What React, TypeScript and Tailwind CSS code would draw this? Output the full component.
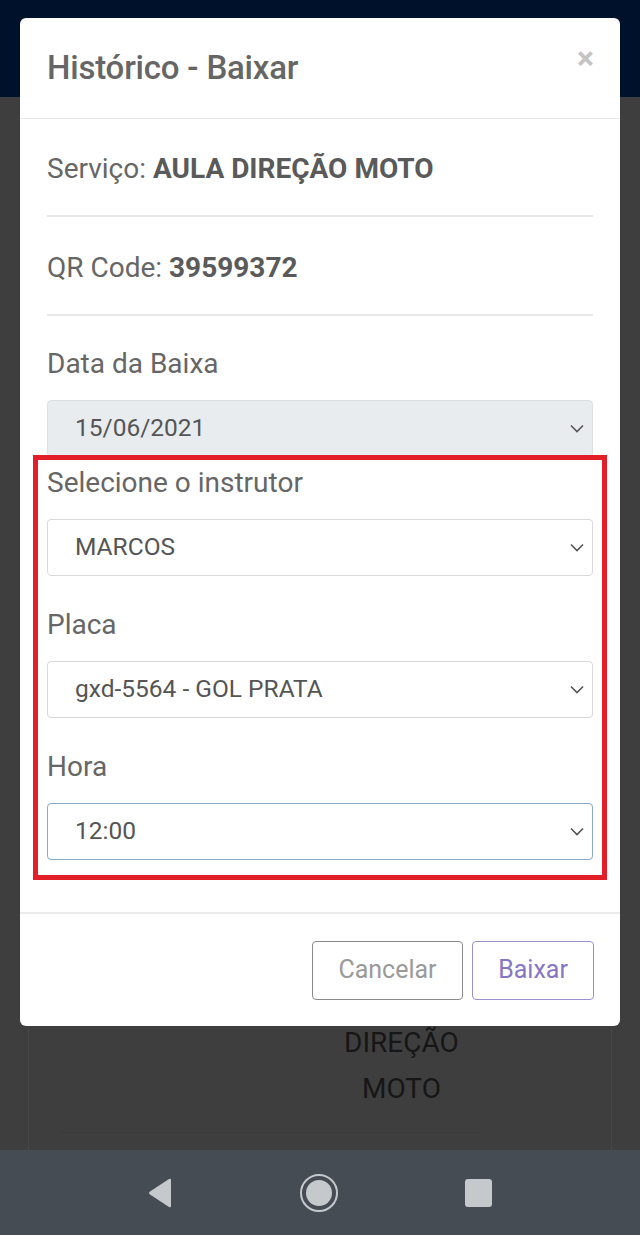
import React from "react";

const Chevron = () => (
  <svg width="14" height="9" viewBox="0 0 14 9" className="shrink-0">
    <path d="M1 1.5 L7 7.5 L13 1.5" fill="none" stroke="#555" strokeWidth="1.6" />
  </svg>
);

function Select({ value, disabled, focus }: { value: string; disabled?: boolean; focus?: boolean }) {
  return (
    <div
      className={`h-[57px] rounded-[4px] border flex items-center justify-between pl-[27px] pr-[8px] text-[24.5px] ${
        disabled ? "bg-[#e9ecef] border-[#dcdfe2]" : "bg-white"
      } ${focus ? "border-[#86acca] border-[1.5px]" : disabled ? "" : "border-[#d9d9d9]"} text-[#555]`}
    >
      <span>{value}</span>
      <Chevron />
    </div>
  );
}

function Label({ children }: { children: React.ReactNode }) {
  return <div className="text-[28px] leading-[36px] text-[#666]">{children}</div>;
}

export default function App() {
  return (
    <div
      className="relative w-[640px] h-[1235px] overflow-hidden bg-[#3e3e3e] flex flex-col"
      style={{ fontFamily: "Roboto, 'Noto Sans', sans-serif" }}
    >
      {/* page behind the modal */}
      <div className="h-[97px] bg-[#00122b] shrink-0" />
      <div className="flex-1 flex flex-col px-[28px]">
        <div className="flex-1 border-x border-[#474747] flex flex-col justify-end items-center pb-[17px]">
          <div className="w-full pl-[300px] text-[28px] leading-[46px] text-[#161616]">
            <div className="pl-[15px]">DIREÇÃO</div>
            <div className="pl-[33px]">MOTO</div>
          </div>
          <div className="w-[420px] mt-[20px] mr-[100px] border-t border-[#3a3a3a]" />
        </div>
      </div>
      {/* android nav bar */}
      <div className="h-[85px] shrink-0 bg-[#454c54] flex items-center justify-center gap-[126px] pr-[2px]">
        <svg width="26" height="30" viewBox="0 0 26 30">
          <path d="M24 2 L24 28 Q24 30 22 29 L3 16.5 Q1 15 3 13.5 L22 1 Q24 0 24 2 Z" fill="#c6c9cc" />
        </svg>
        <svg width="40" height="40" viewBox="0 0 40 40">
          <circle cx="20" cy="20" r="18" fill="none" stroke="#c6c9cc" strokeWidth="2" />
          <circle cx="20" cy="20" r="13" fill="#c6c9cc" />
        </svg>
        <div className="w-[27px] h-[28px] rounded-[3px] bg-[#c6c9cc]" />
      </div>

      {/* modal */}
      <div className="absolute left-[20px] top-[18px] w-[600px] rounded-[6px] bg-white flex flex-col">
        <div className="h-[101px] border-b border-[#e6e8ea] flex items-center justify-between pl-[27px] pr-[27px]">
          <div className="text-[33px] font-medium text-[#666] tracking-[-0.2px]">Histórico - Baixar</div>
          <div className="text-[32px] font-bold text-[#c4c4c4] leading-none -mt-[20px] mr-[-1px]">×</div>
        </div>
        <div className="px-[27px]">
          <div className="h-[98px] border-b-2 border-[#e8e8e8] flex items-center text-[28px] text-[#666] pt-[4px]">
            <span>
              Serviço: <b className="font-bold text-[#5a5a5a]">AULA DIREÇÃO MOTO</b>
            </span>
          </div>
          <div className="h-[99px] border-b-2 border-[#e8e8e8] flex items-center text-[28px] text-[#666] pt-[4px]">
            <span>
              QR Code: <b className="font-bold text-[#5a5a5a]">39599372</b>
            </span>
          </div>
          <div className="pt-[30px]">
            <Label>Data da Baixa</Label>
            <div className="mt-[18px]">
              <Select value="15/06/2021" disabled />
            </div>
          </div>
          <div className="mx-[-14px] mt-[-2px] border-[5px] border-[#e21f28] px-[9px] pt-[5px] pb-[15px] flex flex-col">
            <Label>Selecione o instrutor</Label>
            <div className="mt-[18px]">
              <Select value="MARCOS" />
            </div>
            <div className="mt-[31px]">
              <Label>Placa</Label>
            </div>
            <div className="mt-[18px]">
              <Select value="gxd-5564 - GOL PRATA" />
            </div>
            <div className="mt-[31px]">
              <Label>Hora</Label>
            </div>
            <div className="mt-[18px]">
              <Select value="12:00" focus />
            </div>
          </div>
        </div>
        <div className="mt-[32px] border-t-2 border-[#ebebeb] h-[114px] flex items-center justify-end gap-[9px] pr-[26px]">
          <div className="w-[151px] h-[59px] rounded-[4px] border-[1.5px] border-[#8a8a8a] flex items-center justify-center text-[25px] text-[#9a9a9a]">
            Cancelar
          </div>
          <div className="w-[122px] h-[59px] rounded-[4px] border-[1.5px] border-[#9d90d2] flex items-center justify-center text-[25px] text-[#8676c6]">
            Baixar
          </div>
        </div>
      </div>
    </div>
  );
}
